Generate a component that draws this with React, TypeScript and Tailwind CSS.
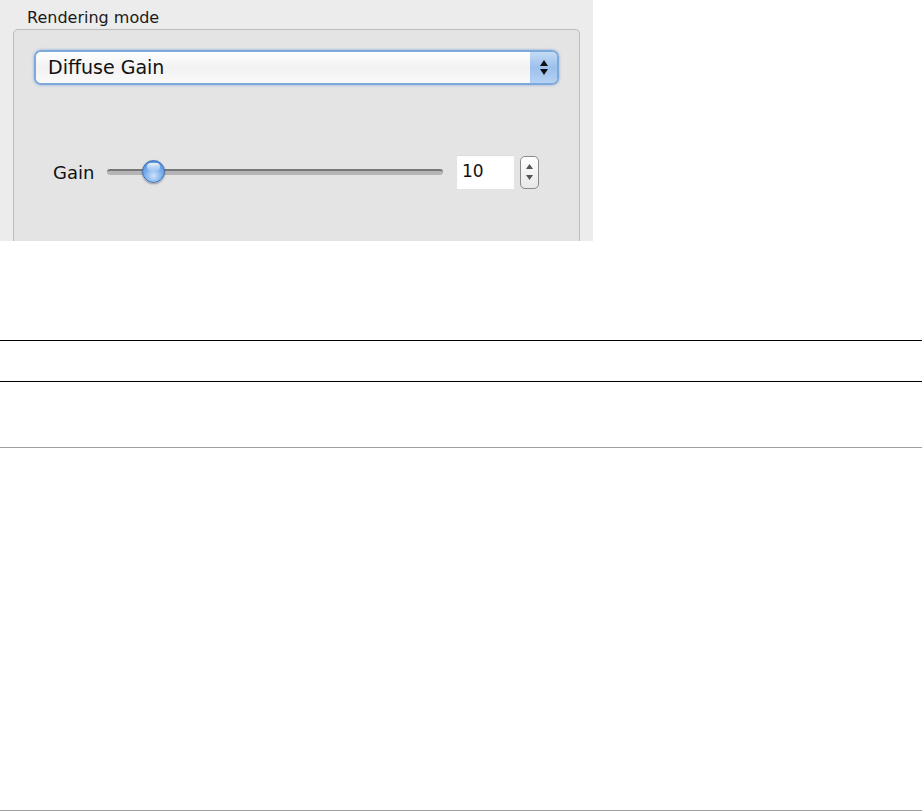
const FONT = "font-['DejaVu_Sans',sans-serif]"

function PopupButton() {
  return (
    <div className="ml-[20px] mt-[20px] flex h-[35px] w-[525px] overflow-hidden rounded-[7px] border-2 border-[#7ea9dc] shadow-[0_0_3px_rgba(70,130,210,0.6)]">
      <div className="flex flex-1 items-center bg-gradient-to-b from-white via-[#f2f2f2] to-[#fafafa] pl-[12px]">
        <span className={`${FONT} text-[19px] leading-none text-[#111]`}>Diffuse Gain</span>
      </div>
      <div className="flex w-[27px] flex-col items-center justify-center gap-[3px] bg-gradient-to-b from-[#c4dbf5] via-[#9cc0ec] to-[#b4d2f4]">
        <svg width="8" height="6" viewBox="0 0 8 6"><path d="M4 0 L8 6 L0 6 Z" fill="#111" /></svg>
        <svg width="8" height="6" viewBox="0 0 8 6"><path d="M0 0 L8 0 L4 6 Z" fill="#111" /></svg>
      </div>
    </div>
  )
}

function Slider() {
  return (
    <div className="relative h-[24px] w-[336px]">
      <div className="absolute left-0 right-0 top-[9px] h-[6px] rounded-full border-t-2 border-[#777] bg-[#b5b5b5]" />
      <div className="absolute left-[35px] top-0 h-[23px] w-[23px] rounded-full border border-[#3d6fb5] bg-[radial-gradient(circle_at_50%_70%,#cfe3fb_0%,#7eb0ec_45%,#3f7ed0_100%)] shadow-[0_1px_2px_rgba(0,0,0,0.35)]">
        <div className="mx-auto mt-[2px] h-[8px] w-[13px] rounded-full bg-gradient-to-b from-white/90 to-white/10" />
      </div>
    </div>
  )
}

function Stepper() {
  return (
    <div className="flex h-[33px] w-[19px] flex-col items-center justify-center gap-[6px] rounded-[5px] border border-[#8a8a8a] bg-gradient-to-b from-white to-[#e8e8e8]">
      <svg width="7" height="5" viewBox="0 0 7 5"><path d="M3.5 0 L7 5 L0 5 Z" fill="#555" /></svg>
      <svg width="7" height="5" viewBox="0 0 7 5"><path d="M0 0 L7 0 L3.5 5 Z" fill="#555" /></svg>
    </div>
  )
}

export default function App() {
  return (
    <div className="h-[811px] w-[923px] bg-white">
      <div className="flex h-[241px] w-[593px] flex-col bg-[#ececec]">
        <div className={`${FONT} ml-[27px] mt-[8px] text-[16px] leading-[19px] text-[#1a1a1a]`}>Rendering mode</div>
        <div className="ml-[13px] mt-[2px] w-[567px] flex-1 rounded-t-[5px] border border-b-0 border-[#bcbcbc] bg-[#e4e4e4]">
          <PopupButton />
          <div className="ml-[39px] mt-[70px] flex items-center">
            <span className={`${FONT} w-[54px] text-[18px] text-[#111]`}>Gain</span>
            <Slider />
            <div className="ml-[14px] flex h-[34px] w-[57px] items-center bg-white pl-[5px] shadow-[inset_0_1px_1px_rgba(0,0,0,0.15)]">
              <span className={`${FONT} text-[17px] text-[#111]`}>10</span>
            </div>
            <div className="ml-[6px]">
              <Stepper />
            </div>
          </div>
        </div>
      </div>
      <div className="mt-[99px] border-t border-black w-[922px]" />
      <div className="mt-[40px] border-t border-black w-[922px]" />
      <div className="mt-[65px] border-t border-[#a0a0a0] w-[922px]" />
      <div className="mt-[362px] border-t border-[#a0a0a0] w-[922px]" />
    </div>
  )
}
